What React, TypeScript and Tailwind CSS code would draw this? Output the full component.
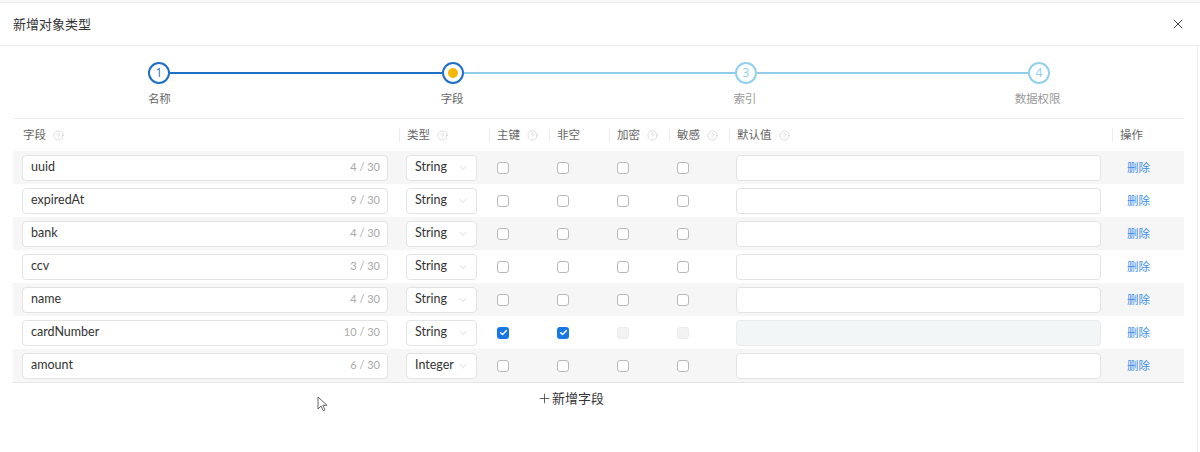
import { ChevronDown, CircleHelp, Plus, X } from "lucide-react";

type Field = {
  name: string;
  type: string;
  pk: boolean;
  notNull: boolean;
  locked?: boolean;
};

const fields: Field[] = [
  { name: "uuid", type: "String", pk: false, notNull: false },
  { name: "expiredAt", type: "String", pk: false, notNull: false },
  { name: "bank", type: "String", pk: false, notNull: false },
  { name: "ccv", type: "String", pk: false, notNull: false },
  { name: "name", type: "String", pk: false, notNull: false },
  { name: "cardNumber", type: "String", pk: true, notNull: true, locked: true },
  { name: "amount", type: "Integer", pk: false, notNull: false },
];

const cols = "grid grid-cols-[384px_90px_60px_60px_60px_60px_383px_75px]";
const latin = { fontFamily: 'Lato, "Noto Sans CJK SC", sans-serif' };

const steps = [
  { n: "1", label: "名称" },
  { n: "2", label: "字段" },
  { n: "3", label: "索引" },
  { n: "4", label: "数据权限" },
];

function Help() {
  return <CircleHelp size={11} strokeWidth={1.3} className="ml-[7px] text-[#c9c9c9]" />;
}

function HeadCell({ label, help, sep = true }: { label: string; help?: boolean; sep?: boolean }) {
  return (
    <div className="relative flex items-center pl-[10px]">
      {sep && <span className="absolute left-[2px] top-[9px] h-[14px] w-px bg-[#ededed]" />}
      <span>{label}</span>
      {help && <Help />}
    </div>
  );
}

function Check({ checked, disabled }: { checked?: boolean; disabled?: boolean }) {
  if (checked) {
    return (
      <span className="flex h-[12px] w-[12px] items-center justify-center rounded-[3px] bg-[#1677e5]">
        <svg width="9" height="9" viewBox="0 0 10 10" fill="none">
          <path d="M1.8 5.2 4 7.3 8.3 2.8" stroke="white" strokeWidth="1.6" strokeLinecap="round" strokeLinejoin="round" />
        </svg>
      </span>
    );
  }
  return (
    <span
      className={
        disabled
          ? "h-[12px] w-[12px] rounded-[3px] border border-[#ececec] bg-[#f3f3f3]"
          : "h-[12px] w-[12px] rounded-[3px] border border-[#b9b9b9] bg-white"
      }
    />
  );
}

function Row({ f, i }: { f: Field; i: number }) {
  return (
    <div className={`${cols} h-[33px] items-center ${i % 2 === 0 ? "bg-[#f6f6f6]" : "bg-white"}`}>
      <div className="pl-[9px] pr-[9px]">
        <div
          className="flex h-[26px] items-center justify-between rounded-[4px] border border-[#e3e3e3] bg-white pl-[8px] pr-[7px]"
          style={latin}
        >
          <span className="text-[12.5px] text-[#333]">{f.name}</span>
          <span className="text-[11px] text-[#a9a9a9]">{f.name.length} / 30</span>
        </div>
      </div>
      <div className="pl-[9px] pr-[10px]">
        <div
          className="flex h-[26px] items-center justify-between rounded-[4px] border border-[#e3e3e3] bg-white pl-[8px] pr-[7px]"
          style={latin}
        >
          <span className="text-[12.5px] text-[#333]">{f.type}</span>
          <ChevronDown size={12} strokeWidth={1} className="text-[#b5b5b5]" />
        </div>
      </div>
      <div className="flex pl-[10px]"><Check checked={f.pk} /></div>
      <div className="flex pl-[10px]"><Check checked={f.notNull} /></div>
      <div className="flex pl-[10px]"><Check disabled={f.locked} /></div>
      <div className="flex pl-[10px]"><Check disabled={f.locked} /></div>
      <div className="pl-[9px] pr-[9px]">
        <div
          className={`h-[26px] rounded-[4px] border ${
            f.locked ? "border-[#e9eced] bg-[#f3f6f7]" : "border-[#e3e3e3] bg-white"
          }`}
        />
      </div>
      <div className="flex items-center pl-[17px]">
        <span className="text-[11.5px] leading-[14px] text-[#3a8ee6]">删除</span>
      </div>
    </div>
  );
}

export default function App() {
  return (
    <div
      className="relative h-[452px] w-[1200px] overflow-hidden bg-white text-[#333]"
      style={{ fontFamily: '"Open Sans", "Noto Sans CJK SC", sans-serif' }}
    >
      <div className="h-[3px] border-b border-[#ededed] bg-[#fafafa]" />
      <div className="flex h-[43px] items-center justify-between border-b border-[#ececec] pl-[13px] pr-[14px]">
        <span className="pt-[1px] text-[13px] text-[#333]">新增对象类型</span>
        <X size={16} strokeWidth={1.4} className="text-[#333]" />
      </div>

      <div className="h-[406px] w-[1198px] border-r border-[#eeeeee]">
        <div className="mx-[13px] pt-[16px]">
          <div className="flex items-center pl-[135px]">
            <span className="flex h-[22px] w-[22px] items-center justify-center rounded-full border-2 border-[#1f6fc8] text-[12px] text-[#1f6fc8]">
              1
            </span>
            <span className="h-[2px] w-[272px] bg-[#1f6fc8]" />
            <span className="flex h-[22px] w-[22px] items-center justify-center rounded-full border-2 border-[#1f6fc8]">
              <span className="h-[10px] w-[10px] rounded-full bg-[#f6b708]" />
            </span>
            <span className="h-[1.5px] w-[271px] bg-[#8fcdea]" />
            <span className="flex h-[22px] w-[22px] items-center justify-center rounded-full border-2 border-[#92d0ec] text-[12px] text-[#8fcdea]">
              3
            </span>
            <span className="h-[1.5px] w-[271px] bg-[#8fcdea]" />
            <span className="flex h-[22px] w-[22px] items-center justify-center rounded-full border-2 border-[#92d0ec] text-[12px] text-[#8fcdea]">
              4
            </span>
          </div>
          <div className="mt-[7px] grid grid-cols-4 text-center text-[11.5px] leading-[16px]">
            {steps.map((s, i) => (
              <span key={s.n} className={i < 2 ? "text-[#666]" : "text-[#999]"}>
                {s.label}
              </span>
            ))}
          </div>
        </div>

        <div className="mx-[13px] mt-[11px] border-t border-[#ececec]">
          <div className={`${cols} h-[32px] text-[11.5px] text-[#666]`}>
            <HeadCell label="字段" help sep={false} />
            <HeadCell label="类型" help />
            <HeadCell label="主键" help />
            <HeadCell label="非空" />
            <HeadCell label="加密" help />
            <HeadCell label="敏感" help />
            <HeadCell label="默认值" help />
            <HeadCell label="操作" />
          </div>
          <div className="border-b border-[#e6e6e6]">
            {fields.map((f, i) => (
              <Row key={f.name} f={f} i={i} />
            ))}
          </div>
          <div className="mt-[6px] flex justify-center">
            <div className="mr-[56px] flex items-center text-[13px] text-[#333]">
              <Plus size={15} strokeWidth={1.2} />
              <span>新增字段</span>
            </div>
          </div>
        </div>
      </div>

      <svg className="absolute left-[317px] top-[396px]" width="12" height="16" viewBox="0 0 12 16">
        <path d="M1 1v12l3-3 2.2 4.6 1.8-.8L5.8 9.3H10z" fill="white" stroke="#555" strokeWidth="0.9" strokeLinejoin="round" />
      </svg>
    </div>
  );
}
